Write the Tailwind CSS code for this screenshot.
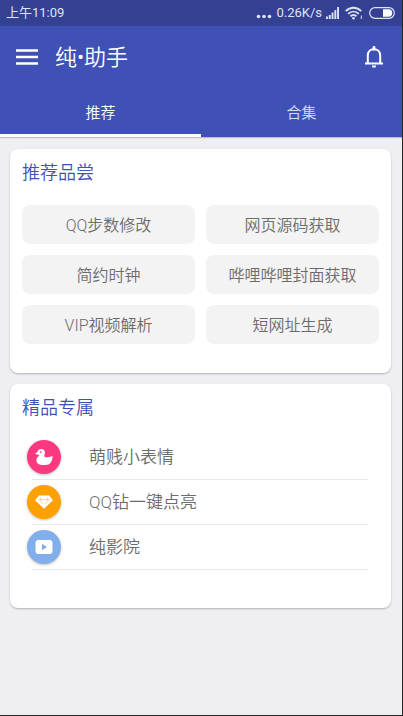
<!DOCTYPE html>
<html lang="zh-CN">
<head>
<meta charset="utf-8">
<meta name="viewport" content="width=device-width, initial-scale=1">
<title>纯•助手</title>
<script src="https://cdn.jsdelivr.net/npm/@tailwindcss/browser@4"></script>
</head>
<body class="min-h-screen flex flex-col bg-[#eeeef3] border-r border-b border-[#26262a] font-['Roboto','Noto_Sans_CJK_SC',sans-serif] font-[350]">
<header class="bg-[#3f51b5] text-white shadow-[0_1px_1px_rgba(0,0,0,0.2)]">
  <div class="h-[26px] bg-[#344193] flex items-center justify-between pl-1.5 pr-[7px] text-[#dfe3f7]">
    <span class="text-[13px] leading-5 font-normal">上午11:09</span>
    <div class="flex items-center">
      <svg class="w-4 h-3 mr-1" viewBox="0 0 16 12" fill="currentColor" aria-hidden="true"><circle cx="2.5" cy="9.5" r="1.8"/><circle cx="8" cy="9.5" r="1.8"/><circle cx="13.500" cy="9.500" r="1.8"/></svg>
      <span class="text-[13px] leading-5 font-normal">0.26K/s</span>
      <svg class="w-[13px] h-3 ml-1" viewBox="0 0 13 12" fill="currentColor" aria-hidden="true"><path d="M0 9.500h1.900V12H0zM2.800 8h1.900v4H2.800zM5.600 5.500h1.900V12H5.600zM8.400 3h1.900v9H8.400zM11.100 0H13v12h-1.900z"/></svg>
      <svg class="w-[18px] h-[14px] ml-1.5" viewBox="0 0 18 14" fill="none" stroke="currentColor" stroke-width="1.900" aria-hidden="true"><path d="M.8 5.200C5.300.6 11.700.6 16.200 5.200M3.200 7.900c3.200-3.100 7.400-3.100 10.600 0M5.500 10.300c1.800-1.700 4.200-1.700 6 0"/><circle cx="8.500" cy="12.200" r="1.300" fill="currentColor" stroke="none"/><path d="M16.300 9.500V13" stroke-width="1"/></svg>
      <svg class="w-[26px] h-3 ml-1.5" viewBox="0 0 26 12" aria-hidden="true"><rect x=".7" y=".7" width="24.600" height="10.600" rx="5.300" fill="none" stroke="currentColor" stroke-width="1.200"/><path d="M14 2.300h5.500a3.700 3.700 0 0 1 0 7.400H14z" fill="#fff"/></svg>
    </div>
  </div>
  <div class="h-[63px] flex items-center px-4 pb-0.5">
    <button type="button" aria-label="菜单" class="shrink-0"><svg class="w-[22px] h-4" viewBox="0 0 22 16" stroke="currentColor" stroke-width="2.300"><path d="M0 1.500h22M0 8h22M0 14.500h22"/></svg></button>
    <h1 class="ml-[17px] pt-0.5 text-[22px] leading-7 flex-1">纯•助手</h1>
    <button type="button" aria-label="通知" class="mr-0.5"><svg class="w-5 h-[22px]" viewBox="0 0 20 22" fill="none" stroke="currentColor" stroke-width="2"><path d="M1 17.500h18"/><path d="M3.800 17.500V9.500C3.800 5.700 6.300 3.200 10 3.200s6.200 2.500 6.200 6.300v8"/><path d="M10 1.500v1.700" stroke-width="2.800" stroke-linecap="round"/><path d="M7.800 19.500h4.400a2.200 2.200 0 0 1-4.400 0z" fill="currentColor" stroke="none"/></svg></button>
  </div>
  <nav class="grid grid-cols-2 h-12 text-[15px] leading-5">
    <a href="#recommend" aria-current="page" class="flex items-center justify-center border-b-3 border-white pt-[3px]">推荐</a>
    <a href="#collection" class="flex items-center justify-center text-white/80">合集</a>
  </nav>
</header>
<main id="recommend" class="flex flex-col gap-[11px] pt-3 pl-2.5 pr-[11px] pb-4 text-[#6c6c6c]">
  <section class="bg-white rounded-lg px-3 pt-[11px] pb-[29px] shadow-[0_1px_2px_rgba(0,0,0,0.25)]">
    <h2 class="text-[18px] leading-[26px] text-[#3f51b5]">推荐品尝</h2>
    <div class="grid grid-cols-2 gap-[11px] mt-[19px] text-[16px] leading-[23px]">
      <button type="button" class="bg-[#f3f3f3] rounded-lg pt-[9px] pb-[7px]">QQ步数修改</button>
      <button type="button" class="bg-[#f3f3f3] rounded-lg pt-[9px] pb-[7px]">网页源码获取</button>
      <button type="button" class="bg-[#f3f3f3] rounded-lg pt-[9px] pb-[7px]">简约时钟</button>
      <button type="button" class="bg-[#f3f3f3] rounded-lg pt-[9px] pb-[7px]">哗哩哗哩封面获取</button>
      <button type="button" class="bg-[#f3f3f3] rounded-lg pt-[9px] pb-[7px]">VIP视频解析</button>
      <button type="button" class="bg-[#f3f3f3] rounded-lg pt-[9px] pb-[7px]">短网址生成</button>
    </div>
  </section>
  <section class="bg-white rounded-lg px-3 pt-[11px] pb-[38px] shadow-[0_1px_2px_rgba(0,0,0,0.25)]">
    <h2 class="text-[18px] leading-[26px] text-[#3f51b5]">精品专属</h2>
    <ul class="mt-3.5 ml-[5px] mr-[11px] text-[17px] leading-6">
      <li>
        <a href="#stickers" class="flex items-center gap-7 h-11">
          <span class="size-[34px] rounded-full bg-[#fc3980] shadow-[0_1px_3px_rgba(0,0,0,0.25)] flex items-center justify-center"><svg class="w-[18px] h-[18px]" viewBox="0 0 18 18" aria-hidden="true"><path fill="#fff" d="M6.200 1C8.500 1 10 2.600 10 4.700c0 1.500-.7 2.300-.7 3.100 0 1 .8 1.500 2 1.500 2 0 3.900-.3 6.200-1.300.2 5.600-2.700 9-7 9H6.700C3.600 17 1.400 15 1.400 12.300c0-2.500 1.900-3.600 3.100-5-.8-.1-1.300-.4-1.700-.9C1.500 6.600.6 6.300.2 5.500l2.300-1.400C2.700 2.200 4.200 1 6.200 1z"/><circle cx="5.700" cy="4.100" r=".9" fill="#fc3980"/></svg></span>
          <span>萌贱小表情</span>
        </a>
        <hr class="ml-[5px] border-[#e9e9e9]">
      </li>
      <li>
        <a href="#diamond" class="flex items-center gap-7 h-11">
          <span class="size-[34px] rounded-full bg-[#fda102] shadow-[0_1px_3px_rgba(0,0,0,0.25)] flex items-center justify-center"><svg class="w-[18px] h-[14px]" viewBox="0 0 18 14" aria-hidden="true"><path fill="#fff" d="M3.800.4h10.400L18 5.300 9 13.800 0 5.300z"/><path fill="none" stroke="#fda102" stroke-width=".6" stroke-opacity=".7" d="M3.500 4.500h11M5.700 2.500 5 4.500l2.500 4.500M12.300 2.500l.7 2-2.500 4.500"/></svg></span>
          <span>QQ钻一键点亮</span>
        </a>
        <hr class="ml-[5px] border-[#e9e9e9]">
      </li>
      <li>
        <a href="#cinema" class="flex items-center gap-7 h-11">
          <span class="size-[34px] rounded-full bg-[#83aeec] shadow-[0_1px_3px_rgba(0,0,0,0.25)] flex items-center justify-center"><svg class="w-[18px] h-[14px]" viewBox="0 0 18 14" aria-hidden="true"><rect x=".5" width="17" height="14" rx="3" fill="#fff"/><path d="M7 3.800v6.400L12 7z" fill="#83aeec"/></svg></span>
          <span>纯影院</span>
        </a>
        <hr class="ml-[5px] border-[#e9e9e9]">
      </li>
    </ul>
  </section>
</main>
</body>
</html>
